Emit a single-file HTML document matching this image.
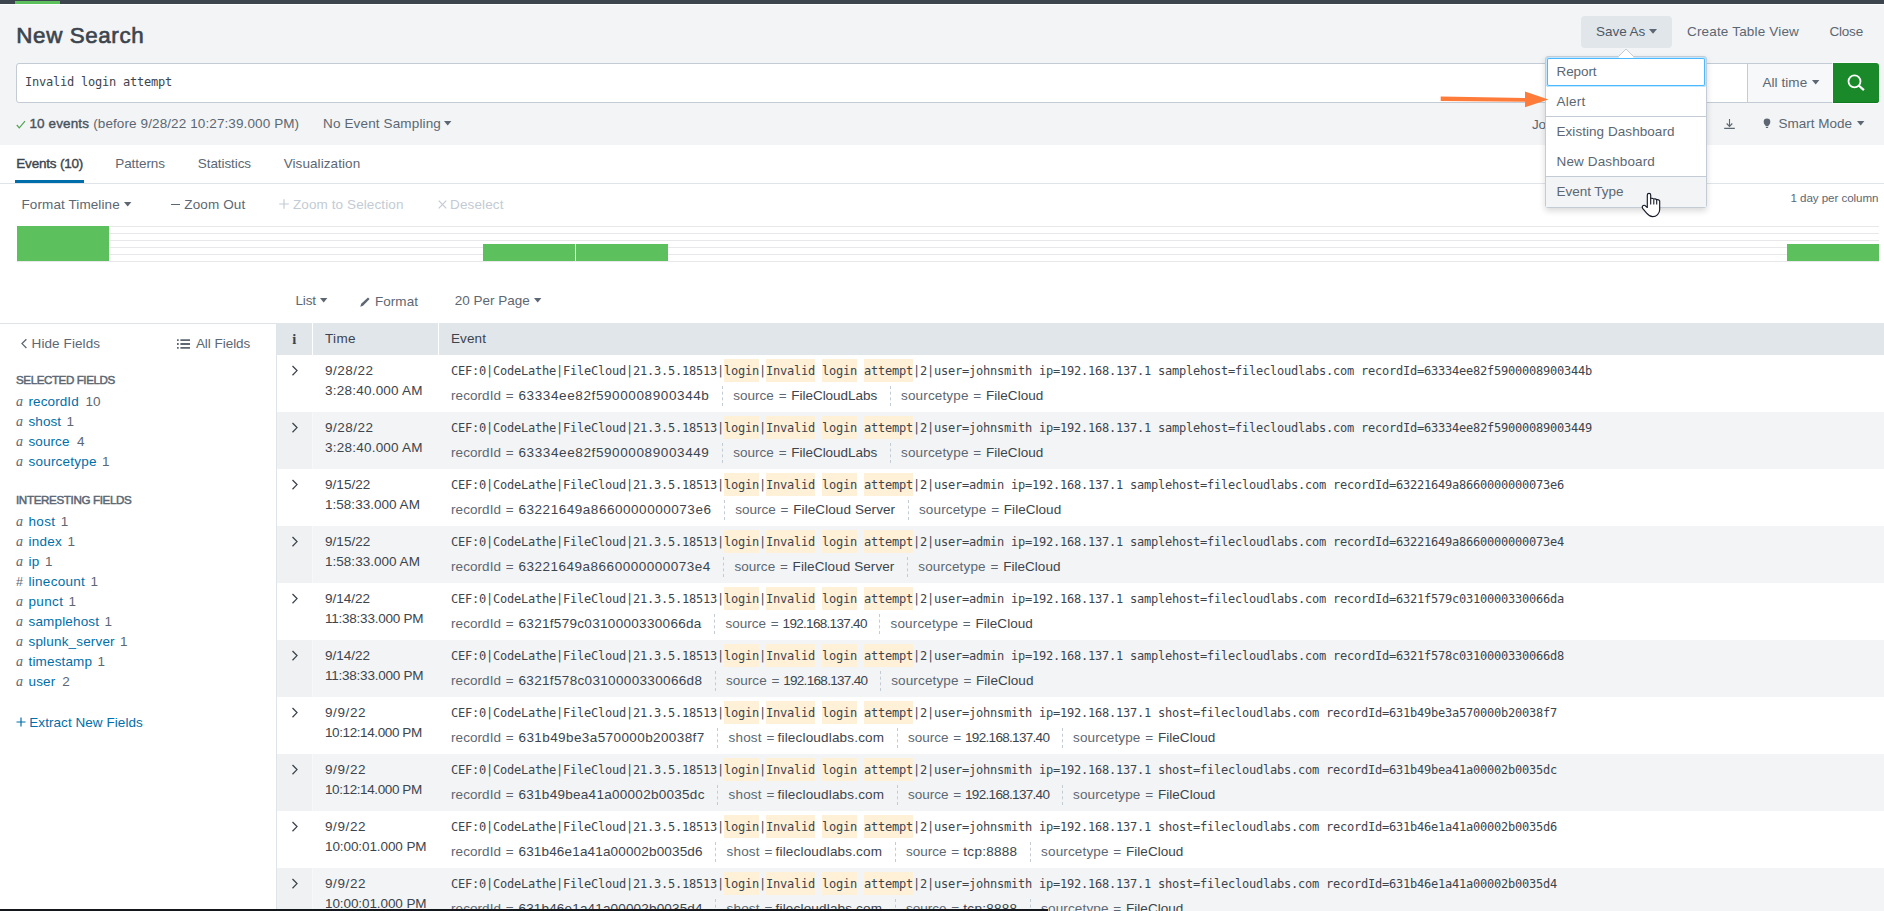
<!DOCTYPE html>
<html lang="en">
<head>
<meta charset="utf-8">
<title>Search | Splunk</title>
<style>
*{box-sizing:border-box}
html,body{margin:0;padding:0}
body{width:1884px;height:911px;overflow:hidden;position:relative;background:#fff;color:#3c444d;
 font-family:"Liberation Sans",sans-serif;font-size:13.5px;line-height:20px}
.layer{position:absolute;left:0;top:0;width:1884px;height:0}
.abs{position:absolute}
.t{position:absolute;white-space:pre;line-height:20px}
.mono{font-family:"DejaVu Sans Mono","Liberation Mono",monospace;font-size:12px;letter-spacing:-0.2247px}
svg{display:block}
.caret{position:absolute;color:#5c6773}
ul{list-style:none;margin:0;padding:0}

/* top chrome */
#topbar{position:absolute;left:0;top:0;width:1884px;height:4px;background:#3c444d}
#topbar i{position:absolute;left:15px;top:1px;width:45px;height:3px;background:#5cc05c}
#hdrbg{position:absolute;left:0;top:5px;width:1884px;height:140px;background:#f2f4f5}

#saveas{position:absolute;left:1581px;top:16px;width:91px;height:32px;background:#e1e6eb;border-radius:4px}
#searchbox{position:absolute;left:16px;top:63px;width:1732px;height:40px;background:#fff;border:1px solid #c3cbd4;border-radius:3px 0 0 3px}
#timepicker{position:absolute;left:1747px;top:63px;width:86px;height:40px;background:#f7f8fa;border:1px solid #c3cbd4;border-right:0}
#searchbtn{position:absolute;left:1833px;top:63px;width:46px;height:40px;background:#1a8929;border-radius:0 3px 3px 0;box-shadow:0 0 0 1px rgba(255,255,255,.6),inset 0 -1px 0 #0f7a1f}

/* tabs */
#tabline{position:absolute;left:0;top:183px;width:1884px;height:1px;background:#dfe4e9}
#tabsel{position:absolute;left:15px;top:180px;width:69px;height:3px;background:#006eaa}
.dis{color:#c3cbd4}

/* timeline */
#timeline{position:absolute;left:17px;top:226px;width:1862px;height:36px;
 background:repeating-linear-gradient(to bottom,#e8e8eb 0,#e8e8eb 1px,transparent 1px,transparent 7px)}
#timeline b{position:absolute;bottom:1px;background:#5cc05c;display:block}

/* sidebar */
#sidebar{position:absolute;left:0;top:323px;width:277px;height:588px;border-top:1px solid #dfe4e9;border-right:1px solid #dfe4e9}
#sidebar h6{position:absolute;left:16px;margin:0;font-size:12px;line-height:20px;font-weight:700;color:#5c6773;white-space:pre}
#sidebar ul{position:absolute;left:16px}
#sidebar li{height:20px;line-height:20px;white-space:pre}
#sidebar .ty{display:inline-block;width:12.5px;font-family:"Liberation Serif",serif;font-style:italic;font-size:14px;color:#5c6773}
#sidebar .ty.num{font-family:"Liberation Sans",sans-serif;font-style:normal;font-size:12.5px}
#sidebar .fn{color:#006eaa}
#sidebar .ct{color:#5c6773;margin-left:6px}
.link{color:#006eaa}

/* table */
#events{position:absolute;left:277px;top:323px;width:1607px;border-collapse:separate;border-spacing:0;table-layout:fixed}
#events th{height:32px;background:#e1e6eb;text-align:left;font-weight:400;padding:0;border-right:1px solid #fff;position:relative}
#events th:last-child{border-right:0}
#events td{height:57px;padding:0;vertical-align:top;position:relative}
#events tr.odd td{background:#f2f4f5}
#events tr.odd td.exp{background:#eff1f3;border-right:1px solid #f7f8fa}
#events td.exp svg{position:absolute;left:13.5px;top:10px}
#events td.time div{position:absolute;left:12px;white-space:pre;line-height:20px}
#events td.time div:first-child{top:6.1px}
#events td.time div:last-child{top:26.1px}
#events .raw{position:absolute;left:12px;top:4px;height:23px;line-height:25px;white-space:pre;
 font-family:"DejaVu Sans Mono","Liberation Mono",monospace;font-size:12px;letter-spacing:-0.2247px}
#events .raw em{font-style:normal;background:#fff0d8;display:inline-block;height:23px}
#events .fields{position:absolute;left:12px;top:31px;white-space:nowrap;display:flex}
#events .fields li{height:20px;line-height:20px;padding:0 12.4px 0 10.4px;border-left:1px dashed #c3cbd4;white-space:pre}
#events .fields li.first{border-left:0;padding-left:0}
#events .fields .k{color:#5c6773}
#events .fields .eq{color:#5c6773;display:inline-block;width:17.4px;text-align:center;letter-spacing:0}
#events .fields .hex{font-size:13.5px;letter-spacing:0.62px}

/* dropdown */
#menu{position:absolute;left:1545px;top:56px;width:162px;height:152px;background:#fff;border:1px solid #c3cbd4;border-radius:3px;
 box-shadow:0 3px 6px rgba(0,0,0,.15)}
#menu li{position:absolute;left:0;width:160px;padding:5px 0 0 10.5px;line-height:20px;white-space:pre;color:#5c6773}
#menu .sep{position:absolute;left:0;width:160px;height:1px;background:#c3cbd4}
#bottombar{position:absolute;left:0;top:909px;width:1048px;height:2px;background:#14171b}
</style>
</head>
<body>

<div id="topbar"><i></i></div>
<div id="hdrbg"></div>

<header class="layer">
  <h1 style="margin:0"><span class="t" style="font-size:22.4px;font-weight:400;letter-spacing:0.603px;left:16.3px;top:26.04px;-webkit-text-stroke:0.63px currentColor;">New Search</span></h1>

  <div id="saveas"></div>
  <span class="t" style="font-size:13.5px;font-weight:400;letter-spacing:-0.033px;left:1596px;top:22.12px;color:#4e5965;">Save As</span>
  <svg class="caret" style="left:1649px;top:29.2px" width="8" height="5" viewBox="0 0 8 5"><path d="M0 0h8L4 4.8z" fill="#5c6773"/></svg>
  <span class="t" style="font-size:13.5px;font-weight:400;letter-spacing:0.172px;left:1687px;top:22.12px;color:#5c6773;">Create Table View</span>
  <span class="t" style="font-size:13.5px;font-weight:400;letter-spacing:-0.183px;left:1829.4px;top:22.12px;color:#5c6773;">Close</span>

  <div id="searchbox"></div>
  <span class="t mono" style="left:25px;top:72px">Invalid login attempt</span>
  <div id="timepicker"></div>
  <span class="t" style="font-size:13.5px;font-weight:400;letter-spacing:0.054px;left:1762.5px;top:72.82px;color:#5c6773;">All time</span>
  <svg class="caret" style="left:1812px;top:80px" width="8" height="5" viewBox="0 0 8 5"><path d="M0 0h7.4L3.7 4.6z" fill="#5c6773"/></svg>
  <div id="searchbtn">
    <svg class="abs" style="left:12px;top:10px" width="22" height="22" viewBox="0 0 22 22"><circle cx="9.5" cy="8.3" r="6" fill="none" stroke="#fff" stroke-width="1.800"/><path d="M13.700 12.500 L18.900 17.100" stroke="#fff" stroke-width="2.300"/></svg>
  </div>

  <svg class="abs" style="left:16px;top:119px" width="10" height="10" viewBox="0 0 10 10"><path d="M0.800 6 L3.300 8.800 L9 2.200" fill="none" stroke="#53a051" stroke-width="1.150"/></svg>
  <span class="t" style="font-size:13.5px;font-weight:400;letter-spacing:0.106px;left:29.5px;top:114.12px;color:#48525c;-webkit-text-stroke:0.38px currentColor;">10 events</span>
  <span class="t" style="font-size:13.5px;font-weight:400;letter-spacing:0.105px;left:93.2px;top:114.12px;color:#5c6773;">(before 9/28/22 10:27:39.000 PM)</span>
  <span class="t" style="font-size:13.5px;font-weight:400;letter-spacing:0.143px;left:323px;top:114.12px;color:#5c6773;">No Event Sampling</span>
  <svg class="caret" style="left:444px;top:121px" width="8" height="5" viewBox="0 0 8 5"><path d="M0 0h7.4L3.7 4.6z" fill="#5c6773"/></svg>

  <span class="t" style="font-size:13.5px;font-weight:400;letter-spacing:-0.260px;left:1532px;top:114.72px;color:#5c6773;">Job</span>
  <svg class="abs" style="left:1723px;top:118px" width="13" height="12" viewBox="0 0 13 12"><path d="M6.5 1 V8.400 M3.700 5.500 L6.500 8.400 L9.300 5.500 M1.200 10.400 H11.800" fill="none" stroke="#5c6773" stroke-width="1.100"/></svg>
  <svg class="abs" style="left:1763px;top:118px" width="8" height="11" viewBox="0 0 8 11"><circle cx="4" cy="3.700" r="3.300" fill="#5c6773"/><path d="M1.200 5.400 L2.800 8.300 h2.400 L6.800 5.400 z M2.900 8.900 h2.200 v1.100 h-2.200 z" fill="#5c6773"/></svg>
  <span class="t" style="font-size:13.5px;font-weight:400;letter-spacing:-0.013px;left:1778.6px;top:114.12px;color:#5c6773;">Smart Mode</span>
  <svg class="caret" style="left:1857px;top:121px" width="8" height="5" viewBox="0 0 8 5"><path d="M0 0h7.4L3.7 4.6z" fill="#5c6773"/></svg>
</header>

<nav class="layer">
  <span class="t" style="font-size:13.5px;font-weight:400;letter-spacing:-0.203px;left:16.3px;top:154.12px;color:#3c444d;-webkit-text-stroke:0.38px currentColor;">Events (10)</span>
  <span class="t" style="font-size:13.5px;font-weight:400;letter-spacing:-0.060px;left:115.2px;top:154.12px;color:#5c6773;">Patterns</span>
  <span class="t" style="font-size:13.5px;font-weight:400;letter-spacing:-0.082px;left:197.8px;top:154.12px;color:#5c6773;">Statistics</span>
  <span class="t" style="font-size:13.5px;font-weight:400;letter-spacing:0.080px;left:283.7px;top:154.12px;color:#5c6773;">Visualization</span>
  <div id="tabsel"></div>
  <div id="tabline"></div>
</nav>

<section class="layer">
  <span class="t" style="font-size:13.5px;font-weight:400;letter-spacing:0.101px;left:21.5px;top:195.12px;color:#5c6773;">Format Timeline</span>
  <svg class="caret" style="left:124px;top:202px" width="8" height="5" viewBox="0 0 8 5"><path d="M0 0h7.4L3.7 4.6z" fill="#5c6773"/></svg>
  <span class="abs" style="left:171px;top:204px;width:9px;height:1.3px;background:#5c6773"></span>
  <span class="t" style="font-size:13.5px;font-weight:400;letter-spacing:0.121px;left:184.3px;top:195.12px;color:#5c6773;">Zoom Out</span>
  <svg class="abs" style="left:279px;top:199.200px" width="10" height="10" viewBox="0 0 10 10"><path d="M5 0.200V9.800M0.200 5H9.800" stroke="#c3cbd4" stroke-width="1.200"/></svg>
  <span class="t" style="font-size:13.5px;font-weight:400;letter-spacing:0.099px;left:293px;top:195.12px;color:#c3cbd4;">Zoom to Selection</span>
  <svg class="abs" style="left:438px;top:199.800px" width="9" height="9" viewBox="0 0 9 9"><path d="M0.700 0.700L8.300 8.300M8.300 0.700L0.700 8.300" stroke="#c3cbd4" stroke-width="1.200"/></svg>
  <span class="t" style="font-size:13.5px;font-weight:400;letter-spacing:0.134px;left:450px;top:195.12px;color:#c3cbd4;">Deselect</span>
  <span class="t" style="font-size:11.6px;font-weight:400;letter-spacing:-0.059px;left:1790.5px;top:188.08px;color:#5c6773;">1 day per column</span>
  <div id="timeline">
    <b style="left:0;width:92px;height:35px"></b>
    <b style="left:466px;width:92px;height:17px"></b>
    <b style="left:559px;width:92px;height:17px"></b>
    <b style="left:1770px;width:92px;height:17px"></b>
  </div>
</section>

<section class="layer">
  <span class="t" style="font-size:13.5px;font-weight:400;letter-spacing:-0.129px;left:295.4px;top:291.12px;color:#5c6773;">List</span>
  <svg class="caret" style="left:320px;top:298px" width="8" height="5" viewBox="0 0 8 5"><path d="M0 0h7.4L3.7 4.6z" fill="#5c6773"/></svg>
  <svg class="abs" style="left:359px;top:296px" width="12" height="12" viewBox="0 0 12 12"><path d="M1.2 10.8 L2.2 7.8 L9 1.4 L10.6 3 L4 9.8 Z" fill="#5c6773"/></svg>
  <span class="t" style="font-size:13.5px;font-weight:400;letter-spacing:0.039px;left:375px;top:292.12px;color:#5c6773;">Format</span>
  <span class="t" style="font-size:13.5px;font-weight:400;letter-spacing:-0.006px;left:454.8px;top:291.12px;color:#5c6773;">20 Per Page</span>
  <svg class="caret" style="left:534px;top:298px" width="8" height="5" viewBox="0 0 8 5"><path d="M0 0h7.4L3.7 4.6z" fill="#5c6773"/></svg>
</section>

<aside id="sidebar">
  <svg class="abs" style="left:20px;top:13.700px" width="8" height="11" viewBox="0 0 8 11"><path d="M6.400 1.200 L2 5.600 L6.400 10" fill="none" stroke="#5c6773" stroke-width="1.300"/></svg>
  <span class="t" style="font-size:13.5px;font-weight:400;letter-spacing:0.088px;left:31.6px;top:10.12px;color:#5c6773;">Hide Fields</span>
  <svg class="abs" style="left:177px;top:14.700px" width="13" height="10" viewBox="0 0 13 10"><path d="M0 1.200h1.700M3.400 1.200H13M0 5h1.700M3.400 5H13M0 8.800h1.700M3.400 8.800H13" stroke="#5c6773" stroke-width="1.800"/></svg>
  <span class="t" style="font-size:13.5px;font-weight:400;letter-spacing:-0.037px;left:195.9px;top:10.12px;color:#5c6773;">All Fields</span>
  <h6 style="top:46px"><span style="font-size:11.6px;font-weight:400;letter-spacing:-0.415px;-webkit-text-stroke:0.49px currentColor;">SELECTED FIELDS</span></h6>
  <ul style="top:68px"><li><i class="ty">a</i><span class="fn" style="font-size:13.5px;font-weight:400;letter-spacing:0.096px;">recordId</span><span class="ct" style="margin-left:6.8px">10</span></li><li><i class="ty">a</i><span class="fn" style="font-size:13.5px;font-weight:400;letter-spacing:0.064px;">shost</span><span class="ct" style="margin-left:5.3px">1</span></li><li><i class="ty">a</i><span class="fn" style="font-size:13.5px;font-weight:400;letter-spacing:0.078px;">source</span><span class="ct" style="margin-left:7.5px">4</span></li><li><i class="ty">a</i><span class="fn" style="font-size:13.5px;font-weight:400;letter-spacing:0.215px;">sourcetype</span><span class="ct" style="margin-left:5.3px">1</span></li></ul>
  <h6 style="top:166px"><span style="font-size:11.6px;font-weight:400;letter-spacing:-0.348px;-webkit-text-stroke:0.49px currentColor;">INTERESTING FIELDS</span></h6>
  <ul style="top:188px"><li><i class="ty">a</i><span class="fn" style="font-size:13.5px;font-weight:400;letter-spacing:0.342px;">host</span><span class="ct" style="margin-left:5.3px">1</span></li><li><i class="ty">a</i><span class="fn" style="font-size:13.5px;font-weight:400;letter-spacing:0.264px;">index</span><span class="ct" style="margin-left:5.3px">1</span></li><li><i class="ty">a</i><span class="fn" style="font-size:13.5px;font-weight:400;letter-spacing:0.342px;">ip</span><span class="ct" style="margin-left:5.3px">1</span></li><li><i class="ty num">#</i><span class="fn" style="font-size:13.5px;font-weight:400;letter-spacing:0.284px;">linecount</span><span class="ct" style="margin-left:5.3px">1</span></li><li><i class="ty">a</i><span class="fn" style="font-size:13.5px;font-weight:400;letter-spacing:0.354px;">punct</span><span class="ct" style="margin-left:5.3px">1</span></li><li><i class="ty">a</i><span class="fn" style="font-size:13.5px;font-weight:400;letter-spacing:0.165px;">samplehost</span><span class="ct" style="margin-left:5.3px">1</span></li><li><i class="ty">a</i><span class="fn" style="font-size:13.5px;font-weight:400;letter-spacing:0.173px;">splunk_server</span><span class="ct" style="margin-left:5.3px">1</span></li><li><i class="ty">a</i><span class="fn" style="font-size:13.5px;font-weight:400;letter-spacing:0.158px;">timestamp</span><span class="ct" style="margin-left:5.3px">1</span></li><li><i class="ty">a</i><span class="fn" style="font-size:13.5px;font-weight:400;letter-spacing:0.134px;">user</span><span class="ct" style="margin-left:7.0px">2</span></li></ul>
  <svg class="abs" style="left:16px;top:393px" width="10" height="10" viewBox="0 0 10 10"><path d="M5 0.5V9.5M0.5 5H9.5" stroke="#006eaa" stroke-width="1.2"/></svg>
  <span class="t" style="font-size:13.5px;font-weight:400;letter-spacing:0.054px;left:29.3px;top:389.12px;color:#006eaa;">Extract New Fields</span>
</aside>

<table id="events">
<colgroup><col style="width:36px"><col style="width:126px"><col></colgroup>
<thead><tr>
 <th><span class="t" style="left:15.2px;top:6px;font-family:'Liberation Serif',serif;font-weight:700;font-size:14.5px">i</span></th>
 <th><span class="t" style="left:12px;top:6px"><span style="font-size:13.5px;font-weight:400;letter-spacing:0.375px;">Time</span></span></th>
 <th><span class="t" style="left:12px;top:6px"><span style="font-size:13.5px;font-weight:400;letter-spacing:0.094px;">Event</span></span></th>
</tr></thead>
<tbody>
<tr class="even">
<td class="exp"><svg width="8" height="11" viewBox="0 0 8 11"><path d="M1.5 1 L6 5.6 L1.5 10.2" fill="none" stroke="#3c444d" stroke-width="1.3"/></svg></td>
<td class="time"><div><span style="font-size:13.5px;font-weight:400;letter-spacing:0.479px;">9/28/22</span></div><div><span style="font-size:13.5px;font-weight:400;letter-spacing:0.230px;">3:28:40.000 AM</span></div></td>
<td class="ev"><div class="raw">CEF:0|CodeLathe|FileCloud|21.3.5.18513|<em>login</em>|<em>Invalid</em> <em>login</em> <em>attempt</em>|2|user=johnsmith ip=192.168.137.1 samplehost=filecloudlabs.com recordId=63334ee82f5900008900344b</div><ul class="fields"><li class="first"><span class="k" style="font-size:13.5px;font-weight:400;letter-spacing:0.071px;">recordId</span><span class="eq">=</span><span class="v" style="font-size:13.5px;font-weight:400;letter-spacing:0.607px;">63334ee82f5900008900344b</span></li><li class=""><span class="k" style="font-size:13.5px;font-weight:400;letter-spacing:0.011px;">source</span><span class="eq">=</span><span class="v" style="font-size:13.5px;font-weight:400;letter-spacing:-0.024px;">FileCloudLabs</span></li><li class=""><span class="k" style="font-size:13.5px;font-weight:400;letter-spacing:0.145px;">sourcetype</span><span class="eq">=</span><span class="v" style="font-size:13.5px;font-weight:400;letter-spacing:0.041px;">FileCloud</span></li></ul></td>
</tr>
<tr class="odd">
<td class="exp"><svg width="8" height="11" viewBox="0 0 8 11"><path d="M1.5 1 L6 5.6 L1.5 10.2" fill="none" stroke="#3c444d" stroke-width="1.3"/></svg></td>
<td class="time"><div><span style="font-size:13.5px;font-weight:400;letter-spacing:0.479px;">9/28/22</span></div><div><span style="font-size:13.5px;font-weight:400;letter-spacing:0.230px;">3:28:40.000 AM</span></div></td>
<td class="ev"><div class="raw">CEF:0|CodeLathe|FileCloud|21.3.5.18513|<em>login</em>|<em>Invalid</em> <em>login</em> <em>attempt</em>|2|user=johnsmith ip=192.168.137.1 samplehost=filecloudlabs.com recordId=63334ee82f59000089003449</div><ul class="fields"><li class="first"><span class="k" style="font-size:13.5px;font-weight:400;letter-spacing:0.071px;">recordId</span><span class="eq">=</span><span class="v" style="font-size:13.5px;font-weight:400;letter-spacing:0.607px;">63334ee82f59000089003449</span></li><li class=""><span class="k" style="font-size:13.5px;font-weight:400;letter-spacing:0.011px;">source</span><span class="eq">=</span><span class="v" style="font-size:13.5px;font-weight:400;letter-spacing:-0.024px;">FileCloudLabs</span></li><li class=""><span class="k" style="font-size:13.5px;font-weight:400;letter-spacing:0.145px;">sourcetype</span><span class="eq">=</span><span class="v" style="font-size:13.5px;font-weight:400;letter-spacing:0.041px;">FileCloud</span></li></ul></td>
</tr>
<tr class="even">
<td class="exp"><svg width="8" height="11" viewBox="0 0 8 11"><path d="M1.5 1 L6 5.6 L1.5 10.2" fill="none" stroke="#3c444d" stroke-width="1.3"/></svg></td>
<td class="time"><div><span style="font-size:13.5px;font-weight:400;letter-spacing:0.050px;">9/15/22</span></div><div><span style="font-size:13.5px;font-weight:400;letter-spacing:0.023px;">1:58:33.000 AM</span></div></td>
<td class="ev"><div class="raw">CEF:0|CodeLathe|FileCloud|21.3.5.18513|<em>login</em>|<em>Invalid</em> <em>login</em> <em>attempt</em>|2|user=admin ip=192.168.137.1 samplehost=filecloudlabs.com recordId=63221649a8660000000073e6</div><ul class="fields"><li class="first"><span class="k" style="font-size:13.5px;font-weight:400;letter-spacing:0.071px;">recordId</span><span class="eq">=</span><span class="v" style="font-size:13.5px;font-weight:400;letter-spacing:0.533px;">63221649a8660000000073e6</span></li><li class=""><span class="k" style="font-size:13.5px;font-weight:400;letter-spacing:0.011px;">source</span><span class="eq">=</span><span class="v" style="font-size:13.5px;font-weight:400;letter-spacing:0.085px;">FileCloud Server</span></li><li class=""><span class="k" style="font-size:13.5px;font-weight:400;letter-spacing:0.145px;">sourcetype</span><span class="eq">=</span><span class="v" style="font-size:13.5px;font-weight:400;letter-spacing:0.041px;">FileCloud</span></li></ul></td>
</tr>
<tr class="odd">
<td class="exp"><svg width="8" height="11" viewBox="0 0 8 11"><path d="M1.5 1 L6 5.6 L1.5 10.2" fill="none" stroke="#3c444d" stroke-width="1.3"/></svg></td>
<td class="time"><div><span style="font-size:13.5px;font-weight:400;letter-spacing:0.050px;">9/15/22</span></div><div><span style="font-size:13.5px;font-weight:400;letter-spacing:0.023px;">1:58:33.000 AM</span></div></td>
<td class="ev"><div class="raw">CEF:0|CodeLathe|FileCloud|21.3.5.18513|<em>login</em>|<em>Invalid</em> <em>login</em> <em>attempt</em>|2|user=admin ip=192.168.137.1 samplehost=filecloudlabs.com recordId=63221649a8660000000073e4</div><ul class="fields"><li class="first"><span class="k" style="font-size:13.5px;font-weight:400;letter-spacing:0.071px;">recordId</span><span class="eq">=</span><span class="v" style="font-size:13.5px;font-weight:400;letter-spacing:0.504px;">63221649a8660000000073e4</span></li><li class=""><span class="k" style="font-size:13.5px;font-weight:400;letter-spacing:0.011px;">source</span><span class="eq">=</span><span class="v" style="font-size:13.5px;font-weight:400;letter-spacing:0.085px;">FileCloud Server</span></li><li class=""><span class="k" style="font-size:13.5px;font-weight:400;letter-spacing:0.145px;">sourcetype</span><span class="eq">=</span><span class="v" style="font-size:13.5px;font-weight:400;letter-spacing:0.041px;">FileCloud</span></li></ul></td>
</tr>
<tr class="even">
<td class="exp"><svg width="8" height="11" viewBox="0 0 8 11"><path d="M1.5 1 L6 5.6 L1.5 10.2" fill="none" stroke="#3c444d" stroke-width="1.3"/></svg></td>
<td class="time"><div><span style="font-size:13.5px;font-weight:400;letter-spacing:0.008px;">9/14/22</span></div><div><span style="font-size:13.5px;font-weight:400;letter-spacing:-0.235px;">11:38:33.000 PM</span></div></td>
<td class="ev"><div class="raw">CEF:0|CodeLathe|FileCloud|21.3.5.18513|<em>login</em>|<em>Invalid</em> <em>login</em> <em>attempt</em>|2|user=admin ip=192.168.137.1 samplehost=filecloudlabs.com recordId=6321f579c0310000330066da</div><ul class="fields"><li class="first"><span class="k" style="font-size:13.5px;font-weight:400;letter-spacing:0.071px;">recordId</span><span class="eq">=</span><span class="v" style="font-size:13.5px;font-weight:400;letter-spacing:0.313px;">6321f579c0310000330066da</span></li><li class=""><span class="k" style="font-size:13.5px;font-weight:400;letter-spacing:0.011px;">source</span><span class="eq">=</span><span class="v" style="font-size:13.5px;font-weight:400;letter-spacing:-0.689px;margin-left:-0.9px;">192.168.137.40</span></li><li class=""><span class="k" style="font-size:13.5px;font-weight:400;letter-spacing:0.145px;">sourcetype</span><span class="eq">=</span><span class="v" style="font-size:13.5px;font-weight:400;letter-spacing:0.041px;">FileCloud</span></li></ul></td>
</tr>
<tr class="odd">
<td class="exp"><svg width="8" height="11" viewBox="0 0 8 11"><path d="M1.5 1 L6 5.6 L1.5 10.2" fill="none" stroke="#3c444d" stroke-width="1.3"/></svg></td>
<td class="time"><div><span style="font-size:13.5px;font-weight:400;letter-spacing:0.008px;">9/14/22</span></div><div><span style="font-size:13.5px;font-weight:400;letter-spacing:-0.235px;">11:38:33.000 PM</span></div></td>
<td class="ev"><div class="raw">CEF:0|CodeLathe|FileCloud|21.3.5.18513|<em>login</em>|<em>Invalid</em> <em>login</em> <em>attempt</em>|2|user=admin ip=192.168.137.1 samplehost=filecloudlabs.com recordId=6321f578c0310000330066d8</div><ul class="fields"><li class="first"><span class="k" style="font-size:13.5px;font-weight:400;letter-spacing:0.071px;">recordId</span><span class="eq">=</span><span class="v" style="font-size:13.5px;font-weight:400;letter-spacing:0.338px;">6321f578c0310000330066d8</span></li><li class=""><span class="k" style="font-size:13.5px;font-weight:400;letter-spacing:0.011px;">source</span><span class="eq">=</span><span class="v" style="font-size:13.5px;font-weight:400;letter-spacing:-0.689px;margin-left:-0.9px;">192.168.137.40</span></li><li class=""><span class="k" style="font-size:13.5px;font-weight:400;letter-spacing:0.145px;">sourcetype</span><span class="eq">=</span><span class="v" style="font-size:13.5px;font-weight:400;letter-spacing:0.041px;">FileCloud</span></li></ul></td>
</tr>
<tr class="even">
<td class="exp"><svg width="8" height="11" viewBox="0 0 8 11"><path d="M1.5 1 L6 5.6 L1.5 10.2" fill="none" stroke="#3c444d" stroke-width="1.3"/></svg></td>
<td class="time"><div><span style="font-size:13.5px;font-weight:400;letter-spacing:0.609px;">9/9/22</span></div><div><span style="font-size:13.5px;font-weight:400;letter-spacing:-0.402px;">10:12:14.000 PM</span></div></td>
<td class="ev"><div class="raw">CEF:0|CodeLathe|FileCloud|21.3.5.18513|<em>login</em>|<em>Invalid</em> <em>login</em> <em>attempt</em>|2|user=johnsmith ip=192.168.137.1 shost=filecloudlabs.com recordId=631b49be3a570000b20038f7</div><ul class="fields"><li class="first"><span class="k" style="font-size:13.5px;font-weight:400;letter-spacing:0.071px;">recordId</span><span class="eq">=</span><span class="v" style="font-size:13.5px;font-weight:400;letter-spacing:0.407px;">631b49be3a570000b20038f7</span></li><li class=""><span class="k" style="font-size:13.5px;font-weight:400;letter-spacing:0.204px;">shost</span><span class="eq">=</span><span class="v" style="font-size:13.5px;font-weight:400;letter-spacing:0.179px;margin-left:-1.6px;">filecloudlabs.com</span></li><li class=""><span class="k" style="font-size:13.5px;font-weight:400;letter-spacing:0.011px;">source</span><span class="eq">=</span><span class="v" style="font-size:13.5px;font-weight:400;letter-spacing:-0.689px;margin-left:-0.9px;">192.168.137.40</span></li><li class=""><span class="k" style="font-size:13.5px;font-weight:400;letter-spacing:0.145px;">sourcetype</span><span class="eq">=</span><span class="v" style="font-size:13.5px;font-weight:400;letter-spacing:0.041px;">FileCloud</span></li></ul></td>
</tr>
<tr class="odd">
<td class="exp"><svg width="8" height="11" viewBox="0 0 8 11"><path d="M1.5 1 L6 5.6 L1.5 10.2" fill="none" stroke="#3c444d" stroke-width="1.3"/></svg></td>
<td class="time"><div><span style="font-size:13.5px;font-weight:400;letter-spacing:0.609px;">9/9/22</span></div><div><span style="font-size:13.5px;font-weight:400;letter-spacing:-0.402px;">10:12:14.000 PM</span></div></td>
<td class="ev"><div class="raw">CEF:0|CodeLathe|FileCloud|21.3.5.18513|<em>login</em>|<em>Invalid</em> <em>login</em> <em>attempt</em>|2|user=johnsmith ip=192.168.137.1 shost=filecloudlabs.com recordId=631b49bea41a00002b0035dc</div><ul class="fields"><li class="first"><span class="k" style="font-size:13.5px;font-weight:400;letter-spacing:0.071px;">recordId</span><span class="eq">=</span><span class="v" style="font-size:13.5px;font-weight:400;letter-spacing:0.282px;">631b49bea41a00002b0035dc</span></li><li class=""><span class="k" style="font-size:13.5px;font-weight:400;letter-spacing:0.204px;">shost</span><span class="eq">=</span><span class="v" style="font-size:13.5px;font-weight:400;letter-spacing:0.179px;margin-left:-1.6px;">filecloudlabs.com</span></li><li class=""><span class="k" style="font-size:13.5px;font-weight:400;letter-spacing:0.011px;">source</span><span class="eq">=</span><span class="v" style="font-size:13.5px;font-weight:400;letter-spacing:-0.689px;margin-left:-0.9px;">192.168.137.40</span></li><li class=""><span class="k" style="font-size:13.5px;font-weight:400;letter-spacing:0.145px;">sourcetype</span><span class="eq">=</span><span class="v" style="font-size:13.5px;font-weight:400;letter-spacing:0.041px;">FileCloud</span></li></ul></td>
</tr>
<tr class="even">
<td class="exp"><svg width="8" height="11" viewBox="0 0 8 11"><path d="M1.5 1 L6 5.6 L1.5 10.2" fill="none" stroke="#3c444d" stroke-width="1.3"/></svg></td>
<td class="time"><div><span style="font-size:13.5px;font-weight:400;letter-spacing:0.609px;">9/9/22</span></div><div><span style="font-size:13.5px;font-weight:400;letter-spacing:-0.089px;">10:00:01.000 PM</span></div></td>
<td class="ev"><div class="raw">CEF:0|CodeLathe|FileCloud|21.3.5.18513|<em>login</em>|<em>Invalid</em> <em>login</em> <em>attempt</em>|2|user=johnsmith ip=192.168.137.1 shost=filecloudlabs.com recordId=631b46e1a41a00002b0035d6</div><ul class="fields"><li class="first"><span class="k" style="font-size:13.5px;font-weight:400;letter-spacing:0.071px;">recordId</span><span class="eq">=</span><span class="v" style="font-size:13.5px;font-weight:400;letter-spacing:0.167px;">631b46e1a41a00002b0035d6</span></li><li class=""><span class="k" style="font-size:13.5px;font-weight:400;letter-spacing:0.204px;">shost</span><span class="eq">=</span><span class="v" style="font-size:13.5px;font-weight:400;letter-spacing:0.179px;margin-left:-1.6px;">filecloudlabs.com</span></li><li class=""><span class="k" style="font-size:13.5px;font-weight:400;letter-spacing:0.011px;">source</span><span class="eq">=</span><span class="v" style="font-size:13.5px;font-weight:400;letter-spacing:0.275px;margin-left:-0.6px;">tcp:8888</span></li><li class=""><span class="k" style="font-size:13.5px;font-weight:400;letter-spacing:0.145px;">sourcetype</span><span class="eq">=</span><span class="v" style="font-size:13.5px;font-weight:400;letter-spacing:0.041px;">FileCloud</span></li></ul></td>
</tr>
<tr class="odd">
<td class="exp"><svg width="8" height="11" viewBox="0 0 8 11"><path d="M1.5 1 L6 5.6 L1.5 10.2" fill="none" stroke="#3c444d" stroke-width="1.3"/></svg></td>
<td class="time"><div><span style="font-size:13.5px;font-weight:400;letter-spacing:0.609px;">9/9/22</span></div><div><span style="font-size:13.5px;font-weight:400;letter-spacing:-0.089px;">10:00:01.000 PM</span></div></td>
<td class="ev"><div class="raw">CEF:0|CodeLathe|FileCloud|21.3.5.18513|<em>login</em>|<em>Invalid</em> <em>login</em> <em>attempt</em>|2|user=johnsmith ip=192.168.137.1 shost=filecloudlabs.com recordId=631b46e1a41a00002b0035d4</div><ul class="fields"><li class="first"><span class="k" style="font-size:13.5px;font-weight:400;letter-spacing:0.071px;">recordId</span><span class="eq">=</span><span class="v" style="font-size:13.5px;font-weight:400;letter-spacing:0.167px;">631b46e1a41a00002b0035d4</span></li><li class=""><span class="k" style="font-size:13.5px;font-weight:400;letter-spacing:0.204px;">shost</span><span class="eq">=</span><span class="v" style="font-size:13.5px;font-weight:400;letter-spacing:0.179px;margin-left:-1.6px;">filecloudlabs.com</span></li><li class=""><span class="k" style="font-size:13.5px;font-weight:400;letter-spacing:0.011px;">source</span><span class="eq">=</span><span class="v" style="font-size:13.5px;font-weight:400;letter-spacing:0.275px;margin-left:-0.6px;">tcp:8888</span></li><li class=""><span class="k" style="font-size:13.5px;font-weight:400;letter-spacing:0.145px;">sourcetype</span><span class="eq">=</span><span class="v" style="font-size:13.5px;font-weight:400;letter-spacing:0.041px;">FileCloud</span></li></ul></td>
</tr>
</tbody>
</table>

<!-- Save As dropdown -->
<div id="menu">
  <ul>
    <li style="top:0;height:30px;box-shadow:inset 0 0 0 1px #c4e8ff,inset 0 0 0 2px #4ab9ff;border-radius:3px"><span style="font-size:13.5px;font-weight:400;letter-spacing:-0.089px;">Report</span></li>
    <li style="top:30px;height:29px"><span style="font-size:13.5px;font-weight:400;letter-spacing:0.247px;">Alert</span></li>
    <li style="top:60px;height:30px"><span style="font-size:13.5px;font-weight:400;letter-spacing:0.051px;">Existing Dashboard</span></li>
    <li style="top:90px;height:29px"><span style="font-size:13.5px;font-weight:400;letter-spacing:0.130px;">New Dashboard</span></li>
    <li style="top:120px;height:30px;background:#f2f4f5"><span style="font-size:13.5px;font-weight:400;letter-spacing:-0.030px;">Event Type</span></li>
  </ul>
  <div class="sep" style="top:59px"></div>
  <div class="sep" style="top:119px"></div>
</div>
<svg class="abs" style="left:1617px;top:48px" width="18" height="10" viewBox="0 0 18 10"><path d="M1 9 L9 1 L17 9" fill="#fff" stroke="#c3cbd4" stroke-width="1"/><path d="M1.5 9.6 H16.5" stroke="#fff" stroke-width="1.6"/></svg>

<!-- annotation arrow -->
<svg class="abs" style="left:1436px;top:88px" width="116" height="24" viewBox="1436 88 116 24"><path d="M1440.7 96.6 L1525 97.9 L1525 91.5 L1548.4 99.5 L1525 107.3 L1525 101.8 L1440.7 101.1 Z" fill="#ff7b3a"/></svg>

<!-- pointer cursor -->
<svg class="abs" style="left:1640px;top:191px" width="24" height="28" viewBox="0 0 24 28"><path d="M7.3 16.5 V4 a1.7 1.7 0 0 1 3.400 0 V7.5 Q12.500 6.800 13.800 8.100 Q15.500 7.300 16.700 8.700 Q18.900 8.100 19.700 10 V18.500 C19.700 22.500 16.500 25.600 12.600 25.600 C9.800 25.600 8.300 24.200 6.600 22.200 L2.600 17.300 C1.400 15.700 3.300 13.500 5.100 14.600 Z" fill="#fff" stroke="#141827" stroke-width="1.150" stroke-linejoin="round"/><path d="M10.700 7.500 V13.500 M13.800 8.400 V13.500 M16.700 9 V13.500" fill="none" stroke="#141827" stroke-width="1.100"/></svg>

<div id="bottombar"></div>
</body>
</html>
